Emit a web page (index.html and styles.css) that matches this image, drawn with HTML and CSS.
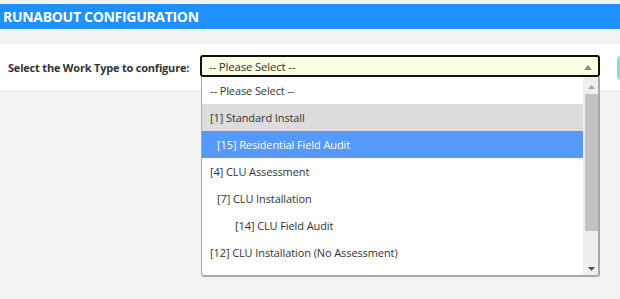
FILE: index.html
```
<!DOCTYPE html>
<html>
<head>
<meta charset="utf-8">
<link rel="stylesheet" href="styles.css">
</head>
<body>
<div class="header">RUNABOUT CONFIGURATION</div>
<div class="panel">
  <label class="label">Select the Work Type to configure:</label>
  <div class="select-wrap">
    <div class="select">
      <span>-- Please Select --</span>
      <svg class="caret" width="8" height="5" viewBox="0 0 8 5"><path d="M0 5 L4 0 L8 5 Z" fill="#8a8a8a"/></svg>
    </div>
    <div class="dropdown">
      <ul class="options">
        <li class="opt">-- Please Select --</li>
        <li class="opt hover">[1] Standard Install</li>
        <li class="opt sel lvl1">[15] Residential Field Audit</li>
        <li class="opt">[4] CLU Assessment</li>
        <li class="opt lvl1">[7] CLU Installation</li>
        <li class="opt lvl2">[14] CLU Field Audit</li>
        <li class="opt">[12] CLU Installation (No Assessment)</li>
        <li class="opt">[16] Lead Based Paint Audit</li>
      </ul>
      <div class="scrollbar">
        <svg class="sb-up" width="7" height="4" viewBox="0 0 7 4"><path d="M0 4 L3.5 0 L7 4 Z" fill="#a3a3a3"/></svg>
        <div class="thumb"></div>
        <svg class="sb-down" width="7" height="4" viewBox="0 0 7 4"><path d="M0 0 L3.5 4 L7 0 Z" fill="#505050"/></svg>
      </div>
    </div>
  </div>
  <div class="btn"></div>
</div>
</body>
</html>
```
FILE: styles.css
```
* { box-sizing: border-box; }
html, body { margin: 0; padding: 0; }
body {
  background: #f3f3f3;
  font-family: "Open Sans", "Noto Sans", sans-serif;
  color: #333;
  width: 620px;
  height: 299px;
  overflow: hidden;
}
.header {
  margin-top: 4px;
  height: 25px;
  background: #1e90ff;
  color: #fff;
  font-weight: 700;
  font-size: 14px;
  line-height: 25px;
  padding-left: 3px;
  letter-spacing: -0.3px;
}
.panel {
  margin-top: 15px;
  height: 48px;
  background: #fff;
  border-bottom: 1px solid #e4e4e4;
  display: flex;
  align-items: flex-start;
  padding-top: 11px;
}
.label {
  flex: none;
  white-space: nowrap;
  font-size: 11px;
  font-weight: 700;
  line-height: 16px;
  color: #333;
  padding-left: 8px;
  width: 200px;
  margin-top: 5px;
  letter-spacing: -0.2px;
}
.select-wrap {
  flex: none;
  position: relative;
  width: 400px;
}
.select {
  height: 22px;
  border: 2px solid #111;
  border-radius: 3px;
  background: #fcfce4;
  font-size: 11.5px;
  color: #333;
  padding-left: 7px;
  display: flex;
  align-items: center;
  justify-content: space-between;
  padding-right: 6px;
  letter-spacing: -0.2px;
}
.caret { margin-top: 2px; }
.dropdown {
  position: absolute;
  left: 1px;
  top: 22px;
  width: 399px;
  height: 200px;
  background: #fff;
  border-left: 1px solid #a8a8a8;
  border-right: 2px solid #a8a8a8;
  border-bottom: 2px solid #a8a8a8;
  border-radius: 0 0 3px 3px;
  display: flex;
  overflow: hidden;
  z-index: 2;
}
.options {
  list-style: none;
  margin: 0;
  padding: 0;
  flex: 1;
}
.opt {
  height: 27px;
  line-height: 27px;
  font-size: 11px;
  padding-left: 8px;
  color: #333;
  white-space: nowrap;
  letter-spacing: -0.1px;
}
.opt.hover { background: #dcdcdc; }
.opt.sel { background: #5599fb; color: #fff; }
.opt.lvl1 { padding-left: 15px; }
.opt.lvl2 { padding-left: 33px; }
.scrollbar {
  flex: none;
  width: 15px;
  background: #efefef;
  display: flex;
  flex-direction: column;
  align-items: center;
  padding-top: 8px;
}
.sb-up { flex: none; margin-left: 1px; }
.thumb {
  flex: none;
  margin-top: 5px;
  width: 13px;
  height: 137px;
  margin-left: 2px;
  background: #c1c1c1;
}
.sb-down { flex: none; margin-top: 36px; margin-left: 1px; }
.btn {
  flex: none;
  margin-left: 17px;
  margin-top: 1px;
  width: 10px;
  height: 24px;
  background: #95dbd4;
  border-radius: 4px 0 0 4px;
}
```
